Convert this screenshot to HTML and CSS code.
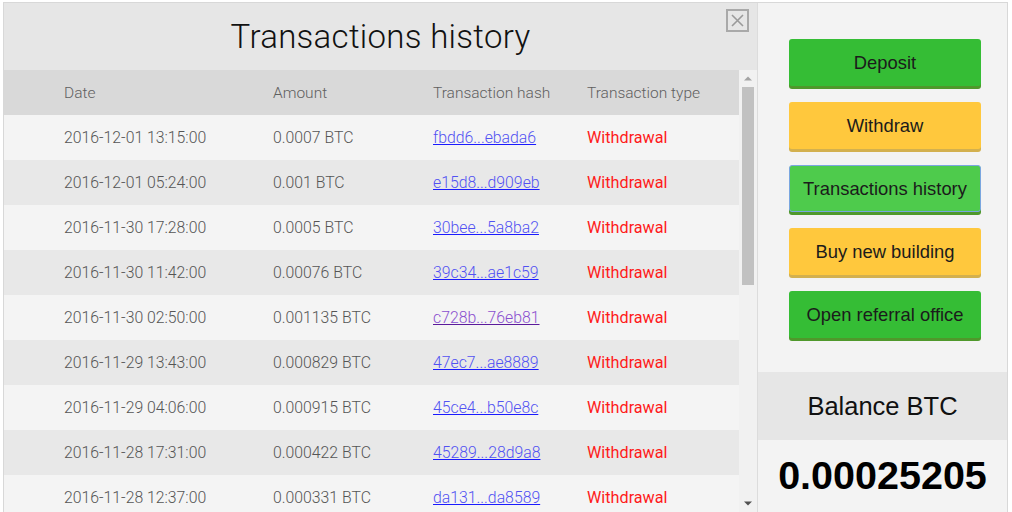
FILE: index.html
```html
<!DOCTYPE html>
<html lang="en">
<head>
    <meta charset="UTF-8">
    <meta name="viewport" content="width=device-width, initial-scale=1.0">
    <title>Transactions history</title>
    <link rel="stylesheet" href="styles.css">
</head>
<body>
    <div class="modal">
        <section class="history">
            <div class="history-head">
                <h1>Transactions history</h1>
                <button class="close" aria-label="Close">
                    <svg width="19" height="19" viewBox="0 0 19 19">
                        <path d="M4 4 L15 15 M15 4 L4 15" stroke="#9a9a9a" stroke-width="1.6" fill="none"/>
                    </svg>
                </button>
            </div>
            <div class="table-wrap">
                <div class="table-view">
                    <table>
                        <colgroup>
                            <col class="col-date">
                            <col class="col-amount">
                            <col class="col-hash">
                            <col>
                        </colgroup>
                        <thead>
                            <tr>
                                <th>Date</th>
                                <th>Amount</th>
                                <th>Transaction hash</th>
                                <th>Transaction type</th>
                            </tr>
                        </thead>
                        <tbody>
                            <tr><td>2016-12-01 13:15:00</td><td>0.0007 BTC</td><td><a href="#">fbdd6...ebada6</a></td><td class="type">Withdrawal</td></tr>
                            <tr><td>2016-12-01 05:24:00</td><td>0.001 BTC</td><td><a href="#">e15d8...d909eb</a></td><td class="type">Withdrawal</td></tr>
                            <tr><td>2016-11-30 17:28:00</td><td>0.0005 BTC</td><td><a href="#">30bee...5a8ba2</a></td><td class="type">Withdrawal</td></tr>
                            <tr><td>2016-11-30 11:42:00</td><td>0.00076 BTC</td><td><a href="#">39c34...ae1c59</a></td><td class="type">Withdrawal</td></tr>
                            <tr><td>2016-11-30 02:50:00</td><td>0.001135 BTC</td><td><a href="#" class="visited">c728b...76eb81</a></td><td class="type">Withdrawal</td></tr>
                            <tr><td>2016-11-29 13:43:00</td><td>0.000829 BTC</td><td><a href="#">47ec7...ae8889</a></td><td class="type">Withdrawal</td></tr>
                            <tr><td>2016-11-29 04:06:00</td><td>0.000915 BTC</td><td><a href="#">45ce4...b50e8c</a></td><td class="type">Withdrawal</td></tr>
                            <tr><td>2016-11-28 17:31:00</td><td>0.000422 BTC</td><td><a href="#">45289...28d9a8</a></td><td class="type">Withdrawal</td></tr>
                            <tr><td>2016-11-28 12:37:00</td><td>0.000331 BTC</td><td><a href="#">da131...da8589</a></td><td class="type">Withdrawal</td></tr>
                        </tbody>
                    </table>
                </div>
                <div class="scrollbar">
                    <div class="sb-btn">
                        <svg width="8" height="5" viewBox="0 0 8 5"><path d="M0 4.5 L4 0.5 L8 4.5 Z" fill="#a3a3a3"/></svg>
                    </div>
                    <div class="sb-thumb"></div>
                    <div class="sb-space"></div>
                    <div class="sb-btn">
                        <svg width="8" height="5" viewBox="0 0 8 5"><path d="M0 0.5 L4 4.5 L8 0.5 Z" fill="#505050"/></svg>
                    </div>
                </div>
            </div>
        </section>

        <aside class="sidebar">
            <div class="actions">
                <button class="btn green">Deposit</button>
                <button class="btn yellow">Withdraw</button>
                <button class="btn green active">Transactions history</button>
                <button class="btn yellow">Buy new building</button>
                <button class="btn green">Open referral office</button>
            </div>
            <div class="balance-title">Balance BTC</div>
            <div class="balance-value">0.00025205</div>
        </aside>
    </div>
</body>
</html>
```

FILE: styles.css
```css
body {
    margin: 0;
    background: #ffffff;
    font-family: 'Roboto', 'Liberation Sans', sans-serif;
    overflow: hidden;
}

.modal {
    display: flex;
    margin: 2px 4px 0 3px;
    height: 510px;
    border: 1px solid #d8d8d8;
    border-bottom: none;
    box-sizing: border-box;
    background: #e6e6e6;
}

.history {
    width: 753px;
    display: flex;
    flex-direction: column;
    position: relative;
}

.history-head {
    height: 67px;
    flex-shrink: 0;
    display: flex;
    align-items: center;
    justify-content: center;
}

h1 {
    margin: 0;
    font-size: 33px;
    font-weight: 300;
    color: #111111;
    letter-spacing: 0.3px;
}

.close {
    position: absolute;
    top: 6px;
    right: 8px;
    width: 23px;
    height: 23px;
    padding: 0;
    border: 2px solid #a9a9a9;
    background: transparent;
    display: flex;
    align-items: center;
    justify-content: center;
    cursor: pointer;
}

.table-wrap {
    flex: 1;
    min-height: 0;
    display: flex;
}

.table-view {
    flex: 1;
    overflow: hidden;
    background: #f4f4f4;
}

.scrollbar {
    width: 18px;
    background: #f1f1f1;
    display: flex;
    flex-direction: column;
}

.sb-btn {
    height: 17px;
    display: flex;
    align-items: center;
    justify-content: center;
}

.sb-thumb {
    height: 198px;
    margin: 0 3px;
    background: #c1c1c1;
}

.sb-space {
    flex: 1;
}

table {
    width: 100%;
    border-collapse: collapse;
    table-layout: fixed;
}

.col-date {
    width: 269px;
}

.col-amount {
    width: 160px;
}

.col-hash {
    width: 154px;
}

th,
td {
    height: 45px;
    padding: 0;
    text-align: left;
    font-size: 15.8px;
    font-weight: 300;
    color: #555555;
    white-space: nowrap;
}

th:first-child,
td:first-child {
    padding-left: 60px;
}

thead tr {
    background: #d9d9d9;
}

th {
    font-size: 15.5px;
    color: #606060;
}

tbody tr:nth-child(odd) {
    background: #f4f4f4;
}

tbody tr:nth-child(even) {
    background: #e8e8e8;
}

a {
    color: #5252f2;
    text-decoration: underline;
    text-decoration-color: #1a1aff;
}

a.visited {
    color: #8a4fcf;
    text-decoration-color: #5a1a9b;
}

td.type {
    color: #ff1a1a;
    font-size: 16.2px;
    font-weight: 400;
}

.sidebar {
    width: 250px;
    border-left: 1px solid #dcdcdc;
    box-sizing: border-box;
    background: #f3f3f3;
    display: flex;
    flex-direction: column;
}

.actions {
    height: 369px;
    flex-shrink: 0;
    box-sizing: border-box;
    padding: 36px 0 0 31px;
    display: flex;
    flex-direction: column;
    gap: 16px;
}

.btn {
    width: 192px;
    height: 47px;
    flex-shrink: 0;
    border: none;
    border-radius: 3px;
    font-family: 'Liberation Sans', sans-serif;
    font-size: 18.4px;
    color: #1b1b1b;
    cursor: pointer;
}

.btn.green {
    background: #35bd35;
    box-shadow: 0 3px 0 #4f982b;
}

.btn.yellow {
    background: #ffc83d;
    box-shadow: 0 3px 0 #d3b04e;
}

.btn.active {
    background: #4ecb4c;
    border: 1px solid #7aa6e0;
}

.balance-title {
    height: 68px;
    flex-shrink: 0;
    background: #e6e6e6;
    display: flex;
    align-items: center;
    justify-content: center;
    font-family: 'Liberation Sans', sans-serif;
    font-size: 25.5px;
    color: #111111;
}

.balance-value {
    flex: 1;
    display: flex;
    align-items: center;
    justify-content: center;
    font-family: 'Liberation Sans', sans-serif;
    font-size: 39.5px;
    font-weight: bold;
    color: #000000;
    padding-bottom: 2px;
}
```
